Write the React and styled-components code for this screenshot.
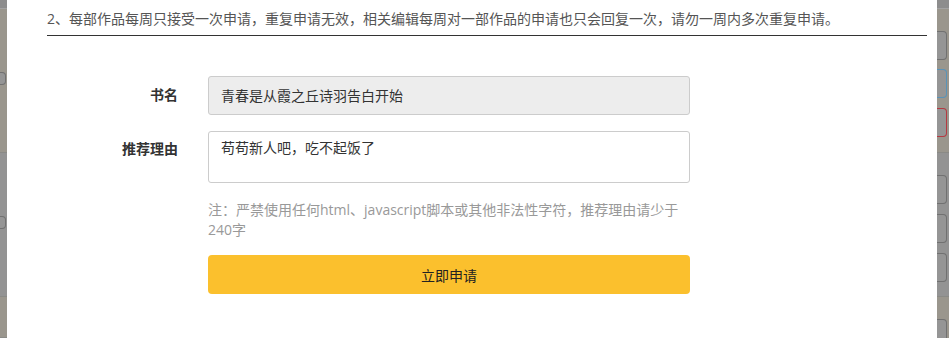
import React from 'react'
import styled, { createGlobalStyle } from 'styled-components'

const GlobalStyle = createGlobalStyle`
  html, body {
    margin: 0;
    padding: 0;
    background: #939393;
    overflow: hidden;
  }
  * {
    box-sizing: border-box;
  }
`

const StyledPage = styled.div`
  display: flex;
  width: 949px;
  height: 338px;
  font-family: "Open Sans", "Noto Sans CJK SC", sans-serif;
  font-size: 14px;
  color: #333;
`

const StyledStrip = styled.div`
  display: flex;
  flex-direction: column;
  width: ${(p) => p.width}px;
  flex-shrink: 0;
`

const StyledBand = styled.div`
  display: flex;
  flex-direction: column;
  height: ${(p) => (p.height ? `${p.height}px` : 'auto')};
  flex: ${(p) => (p.height ? '0 0 auto' : '1')};
  background: ${(p) => (p.tone === 'beige' ? '#9a968d' : p.tone === 'top' ? '#8d8d8d' : '#939393')};
  border-bottom: 1px solid ${(p) => (p.tone === 'top' ? '#a3a3a3' : '#8a8a86')};
`

const StyledStub = styled.div`
  width: ${(p) => p.width}px;
  height: ${(p) => p.height}px;
  margin-top: ${(p) => p.top}px;
  border: 1px solid ${(p) => p.color || '#717171'};
  border-left: none;
  border-radius: 0 4px 4px 0;
  background: #959595;
  flex-shrink: 0;
`

const StyledModal = styled.div`
  flex: 1;
  background: #fff;
  display: flex;
  flex-direction: column;
  padding: 0 10px 0 40px;
`

const StyledNotice = styled.p`
  margin: 0;
  padding: 9px 0 6px;
  line-height: 20px;
  color: #555;
  border-bottom: 1px solid #333;
`

const StyledForm = styled.form`
  display: grid;
  grid-template-columns: 131px 482px;
  column-gap: 30px;
  row-gap: 16px;
  margin-top: 40px;
`

const StyledLabel = styled.label`
  text-align: right;
  font-weight: bold;
  color: #333;
  line-height: 20px;
  padding-top: ${(p) => p.offset}px;
`

const StyledInput = styled.div`
  height: 39px;
  border: 1px solid #ccc;
  border-radius: 3px;
  background: #ededed;
  padding: 0 12px;
  display: flex;
  align-items: center;
  line-height: 20px;
  color: #333;
`

const StyledTextarea = styled.div`
  height: 52px;
  border: 1px solid #ccc;
  border-radius: 3px;
  background: #fff;
  padding: 6px 12px;
  line-height: 20px;
  color: #333;
`

const StyledNote = styled.p`
  grid-column: 2;
  margin: 1px 0 0;
  line-height: 20px;
  color: #999;
`

const StyledButton = styled.button`
  grid-column: 2;
  height: 39px;
  margin-top: -1px;
  border: none;
  border-radius: 4px;
  background: #fbc02d;
  color: #222;
  font-family: inherit;
  font-size: 14px;
  cursor: pointer;
`

const LeftStrip = () => (
  <StyledStrip width={7}>
    <StyledBand tone="top" height={9} />
    <StyledBand tone="beige" height={144}>
      <StyledStub width={6} height={13} top={63} />
    </StyledBand>
    <StyledBand tone="gray" height={144}>
      <StyledStub width={6} height={13} top={63} />
    </StyledBand>
    <StyledBand tone="beige" />
  </StyledStrip>
)

const RightStrip = () => (
  <StyledStrip width={12}>
    <StyledBand tone="top" height={9} />
    <StyledBand tone="beige" height={144}>
      <StyledStub width={10} height={29} top={22} />
      <StyledStub width={10} height={29} top={9} color="#5a93b8" />
      <StyledStub width={10} height={29} top={10} color="#b53a42" />
    </StyledBand>
    <StyledBand tone="gray" height={144}>
      <StyledStub width={10} height={29} top={22} />
      <StyledStub width={10} height={29} top={10} />
      <StyledStub width={10} height={29} top={10} />
    </StyledBand>
    <StyledBand tone="beige">
      <StyledStub width={10} height={29} top={22} />
    </StyledBand>
  </StyledStrip>
)

export default function App() {
  return (
    <StyledPage>
      <GlobalStyle />
      <LeftStrip />
      <StyledModal>
        <StyledNotice>
          2、每部作品每周只接受一次申请，重复申请无效，相关编辑每周对一部作品的申请也只会回复一次，请勿一周内多次重复申请。
        </StyledNotice>
        <StyledForm onSubmit={(e) => e.preventDefault()}>
          <StyledLabel offset={9}>书名</StyledLabel>
          <StyledInput>青春是从霞之丘诗羽告白开始</StyledInput>
          <StyledLabel offset={8}>推荐理由</StyledLabel>
          <StyledTextarea>苟苟新人吧，吃不起饭了</StyledTextarea>
          <StyledNote>
            注：严禁使用任何html、javascript脚本或其他非法性字符，推荐理由请少于240字
          </StyledNote>
          <StyledButton type="submit">立即申请</StyledButton>
        </StyledForm>
      </StyledModal>
      <RightStrip />
    </StyledPage>
  )
}
